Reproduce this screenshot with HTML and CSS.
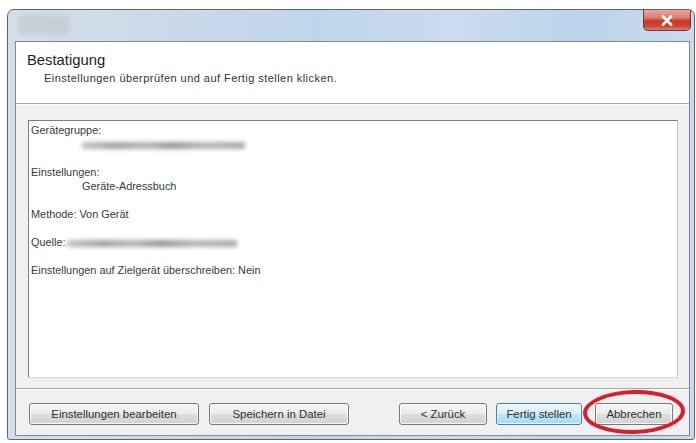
FILE: index.html
```html
<!DOCTYPE html>
<html lang="de">
<head>
<meta charset="utf-8">
<title>Bestätigung</title>
<link rel="stylesheet" href="styles.css">
</head>
<body>
<div class="window">
  <div class="titlebar">
    <div class="title-blur"></div>
    <div class="close-btn">
      <svg width="12" height="11" viewBox="0 0 12 11"><path d="M2 1.5 L10 9.5 M10 1.5 L2 9.5" stroke="#ffffff" stroke-width="2.6" stroke-linecap="round"/></svg>
    </div>
  </div>
  <div class="client">
    <div class="header">
      <div class="h-title">Bestatigung</div>
      <div class="h-sub">Einstellungen überprüfen und auf Fertig stellen klicken.</div>
    </div>
    <div class="body">
      <div class="summary">
        <div class="line">Gerätegruppe:</div>
        <div class="line indent"><span class="blur blur-a"></span></div>
        <div class="line gap"></div>
        <div class="line">Einstellungen:</div>
        <div class="line indent">Geräte-Adressbuch</div>
        <div class="line gap"></div>
        <div class="line">Methode: Von Gerät</div>
        <div class="line gap"></div>
        <div class="line">Quelle: <span class="blur blur-b"></span></div>
        <div class="line gap"></div>
        <div class="line">Einstellungen auf Zielgerät überschreiben: Nein</div>
      </div>
    </div>
    <div class="footer">
      <button class="btn btn-edit">Einstellungen bearbeiten</button>
      <button class="btn btn-save">Speichern in Datei</button>
      <button class="btn btn-back">&lt; Zurück</button>
      <button class="btn btn-finish">Fertig stellen</button>
      <span class="cancel-wrap">
        <button class="btn btn-cancel">Abbrechen</button>
        <span class="ring"></span>
      </span>
    </div>
  </div>
</div>
</body>
</html>
```

FILE: styles.css
```css
html, body {
  margin: 0;
  padding: 0;
  background: #ffffff;
}
body {
  font-family: "Liberation Sans", Arial, sans-serif;
  color: #2a2a2a;
  width: 696px;
  height: 443px;
  overflow: hidden;
}
.window {
  margin: 9px 0 0 7px;
  width: 688px;
  height: 431px;
  box-sizing: border-box;
  border: 1px solid #5d6670;
  border-radius: 7px 7px 3px 3px;
  background: linear-gradient(90deg, #d6dee7 0%, #ccdae9 20%, #c0d5eb 45%, #cadcee 65%, #bdd3ea 85%, #cbdbec 100%);
  padding: 0 4px 3px 7px;
  display: flex;
  flex-direction: column;
}
.titlebar {
  height: 31px;
  flex: none;
  display: flex;
  justify-content: space-between;
  align-items: flex-start;
}
.title-blur {
  width: 52px;
  height: 20px;
  margin: 5px 0 0 3px;
  background: #c4ccd4;
  filter: blur(2px);
  opacity: 0.8;
}
.close-btn {
  width: 48px;
  height: 21px;
  margin-right: -1px;
  box-sizing: border-box;
  border: 1px solid #6c3a36;
  border-top: none;
  border-radius: 0 0 5px 5px;
  background: linear-gradient(180deg, #eba89c 0%, #dc7a6a 40%, #c8372a 55%, #cc4434 80%, #e27e6a 100%);
  display: flex;
  align-items: center;
  justify-content: center;
}
.close-btn svg {
  display: block;
}
.client {
  flex: 1;
  border: 1px solid #7f8a96;
  background: #f0f0f0;
  display: flex;
  flex-direction: column;
}
.header {
  flex: none;
  height: 52px;
  background: #ffffff;
  border-bottom: 1px solid #a9a9a9;
  padding: 9px 0 0 11px;
}
.h-title {
  font-size: 14.8px;
  line-height: 18px;
  color: #1e1e1e;
}
.h-sub {
  font-size: 11px;
  letter-spacing: 0.45px;
  line-height: 13px;
  margin: 3px 0 0 17px;
  color: #333333;
}
.body {
  flex: 1;
  padding: 16px 11px 10px 12px;
  box-shadow: inset 0 1px 0 #ffffff;
}
.summary {
  height: 100%;
  box-sizing: border-box;
  background: #ffffff;
  border: 1px solid #7d7d7d;
  border-right-color: #c4c4c4;
  border-bottom-color: #d4d4d4;
  padding: 2px 2px;
}
.line {
  font-size: 10.9px;
  line-height: 14px;
  height: 14px;
  color: #3a3a3a;
  white-space: nowrap;
}
.line.indent {
  padding-left: 51px;
}
.blur {
  display: inline-block;
  height: 7px;
  vertical-align: middle;
  filter: blur(2px);
  background: linear-gradient(90deg, #c4c4c4 0%, #a2a2a2 20%, #b4b4b4 40%, #979797 55%, #b6b6b6 75%, #aaaaaa 100%);
}
.blur-a {
  width: 163px;
}
.blur-b {
  width: 170px;
  margin-left: -2px;
}
.footer {
  flex: none;
  height: 47px;
  box-sizing: border-box;
  border-top: 1px solid #a9a9a9;
  box-shadow: inset 0 1px 0 #ffffff;
  padding: 14px 0 0 13px;
  display: flex;
  align-items: flex-start;
}
.btn {
  font-family: "Liberation Sans", Arial, sans-serif;
  font-size: 11.4px;
  color: #2e2e2e;
  height: 22px;
  padding: 0;
  margin: 0;
  box-sizing: border-box;
  border: 1px solid #7a7a7a;
  border-radius: 3px;
  background: linear-gradient(180deg, #f6f6f6 0%, #ebebeb 48%, #dddddd 52%, #d2d2d2 100%);
  box-shadow: inset 0 0 0 1px rgba(255,255,255,0.8);
}
.btn-edit { width: 170px; }
.btn-save { width: 140px; margin-left: 10px; }
.btn-back { width: 88px; margin-left: 50px; }
.btn-finish {
  width: 86px;
  margin-left: 9px;
  border-color: #3c7fb1;
  background: linear-gradient(180deg, #eaf6fd 0%, #d9effc 48%, #bee6fd 52%, #a7d9f5 100%);
}
.cancel-wrap {
  position: relative;
  margin-left: 13px;
  display: inline-block;
}
.btn-cancel { width: 78px; display: block; }
.ring {
  position: absolute;
  left: -12px;
  right: -12px;
  top: -13px;
  bottom: -9px;
  border: 4px solid #d81e2c;
  border-radius: 50%;
  transform: rotate(-1.5deg);
}
```
